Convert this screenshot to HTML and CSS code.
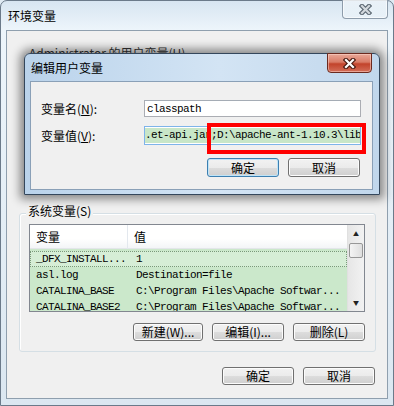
FILE: index.html
```html
<!DOCTYPE html>
<html>
	<head>
		<meta charset="UTF-8">
		<title>环境变量</title>
		<link rel="stylesheet" href="styles.css">
	</head>
	<body>
		<div class="window">
			<div class="titlebar">
				<span class="title">环境变量</span>
				<span class="close-btn">
					<svg width="13" height="11" viewBox="0 0 13 11"><path d="M3 2 L10 9 M10 2 L3 9" stroke="#5d6873" stroke-width="4.5" stroke-linecap="square"/><path d="M3 2 L10 9 M10 2 L3 9" stroke="#d3d8dd" stroke-width="2.2" stroke-linecap="square"/></svg>
				</span>
			</div>

			<div class="client">
				<!--用户变量 (被对话框挡住)-->
				<div class="user-area">Administrator 的用户变量(U)</div>

				<!--系统变量-->
				<div class="group">
					<span class="group-title">系统变量(S)</span>
					<div class="list">
						<div class="list-main">
							<div class="list-head">
								<span class="col1">变量</span>
								<span class="col2">值</span>
							</div>
							<div class="rows">
								<div class="row first"><span class="col1">_DFX_INSTALL...</span><span class="col2">1</span></div>
								<div class="row"><span class="col1">asl.log</span><span class="col2">Destination=file</span></div>
								<div class="row"><span class="col1">CATALINA_BASE</span><span class="col2">C:\Program Files\Apache Softwar...</span></div>
								<div class="row"><span class="col1">CATALINA_BASE2</span><span class="col2">C:\Program Files\Apache Softwar...</span></div>
							</div>
						</div>
						<div class="scrollbar">
							<span class="arrow">&#9650;</span>
							<span class="thumb"></span>
							<span class="spacer"></span>
							<span class="arrow">&#9660;</span>
						</div>
					</div>
					<div class="btn-row">
						<span class="btn w70">新建(W)...</span>
						<span class="btn">编辑(I)...</span>
						<span class="btn">删除(L)</span>
					</div>
				</div>

				<div class="btn-row bottom">
					<span class="btn">确定</span>
					<span class="btn">取消</span>
				</div>
			</div>

			<!--编辑用户变量 对话框-->
			<div class="dialog">
				<div class="dlg-title">
					<span>编辑用户变量</span>
					<span class="red-close">
						<svg width="13" height="11" viewBox="0 0 13 11"><path d="M3 2 L10 9 M10 2 L3 9" stroke="#4a1b12" stroke-width="4.5" stroke-linecap="square"/><path d="M3 2 L10 9 M10 2 L3 9" stroke="#ffffff" stroke-width="2.2" stroke-linecap="square"/></svg>
					</span>
				</div>
				<div class="dlg-client">
					<div class="field">
						<span class="label">变量名(<u>N</u>):</span>
						<span class="input">classpath</span>
					</div>
					<div class="field second">
						<span class="label">变量值(<u>V</u>):</span>
						<span class="input"><span class="sel">.et-api.jar;D:\apache-ant-1.10.3\lib</span><span class="caret"></span></span>
					</div>
					<div class="btn-row dlg-btns">
						<span class="btn default">确定</span>
						<span class="btn">取消</span>
					</div>
				</div>
				<div class="mark"></div>
			</div>
		</div>
	</body>
</html>
```

FILE: styles.css
```css
*{
	margin: 0;
	padding: 0;
	box-sizing: border-box;
}

body{
	width: 394px;
	height: 406px;
	overflow: hidden;
	background: #dfeaf3;
	font: 12px "Noto Sans CJK SC", sans-serif;
	color: #000;
}

/*外层窗口*/
.window{
	position: relative;
	height: 406px;
	border: 1px solid #6b7a8a;
	border-radius: 7px 7px 0 0;
	background: linear-gradient(to bottom, #d7e5f1, #edf5fb 29px, #dbe7f1);
	padding: 0 5px 7px 5px;
}

.titlebar{
	height: 29px;
	display: flex;
	align-items: center;
	padding-left: 2px;
}

.title{
	line-height: 12px;
}

.close-btn{
	position: absolute;
	top: -1px;
	right: 5px;
	width: 46px;
	height: 19px;
	border: 1px solid #8e9cab;
	border-top: none;
	border-radius: 0 0 4px 4px;
	background: linear-gradient(to bottom, rgba(255,255,255,0.5), rgba(255,255,255,0.15));
	box-shadow: inset 0 0 0 1px rgba(255,255,255,0.6);
	display: flex;
	align-items: center;
	justify-content: center;
}

.client{
	height: 369px;
	border: 1px solid #8f9fae;
	background: #f0f0f0;
	padding: 0 11px 0 0;
}

.user-area{
	height: 182px;
	padding: 16px 0 0 22px;
	line-height: 12px;
	color: #333;
}

/*分组框*/
.group{
	position: relative;
	margin-left: 12px;
	border: 1px solid #d5dfe5;
	border-radius: 3px;
	padding: 10px 10px 10px 9px;
	box-shadow: 1px 1px 0 #fff inset;
}

.group-title{
	position: absolute;
	top: -9px;
	left: 6px;
	padding: 0 2px;
	background: #f0f0f0;
	line-height: 12px;
}

/*列表*/
.list{
	display: flex;
	height: 88px;
	border: 1px solid #828790;
	background: #fff;
}

.list-main{
	flex: 1;
	overflow: hidden;
}

.list-head{
	display: flex;
	height: 24px;
	align-items: center;
	background: linear-gradient(to bottom, #fff 60%, #f3f5f7);
	border-bottom: 1px solid #e3e6ea;
}

.list-head .col1{
	border-right: 1px solid #e3e8ee;
	height: 24px;
	line-height: 24px;
}

.col1{
	width: 98px;
	padding-left: 6px;
	flex: none;
}

.col2{
	padding-left: 6px;
	white-space: nowrap;
}

.rows{
	background: #cbe8cb;
	height: 62px;
	padding-top: 2px;
	font: 11px "Liberation Mono", monospace;
	letter-spacing: -0.6px;
}

.row{
	display: flex;
	height: 16px;
	align-items: center;
}

.row .col2{
	padding-left: 8px;
}

.row.first{
	background: #d6eed6;
	outline: 1px dotted #7a9a7a;
	outline-offset: -1px;
}

.scrollbar{
	width: 17px;
	display: flex;
	flex-direction: column;
	align-items: center;
	background: linear-gradient(to right, #e6e6e6, #f2f2f2);
	border-left: 1px solid #e0e0e0;
}

.arrow{
	font-size: 6px;
	line-height: 17px;
	height: 17px;
	color: #222;
}

.thumb{
	width: 14px;
	height: 15px;
	margin-top: 1px;
	border: 1px solid #979797;
	border-radius: 2px;
	background: linear-gradient(to right, #f4f4f4, #dedede);
}

.spacer{
	flex: 1;
}

/*按钮*/
.btn-row{
	display: flex;
	justify-content: flex-end;
	gap: 9px;
	margin-top: 11px;
}

.btn{
	width: 72px;
	height: 18px;
	border: 1px solid #707070;
	border-radius: 3px;
	background: linear-gradient(to bottom, #f2f2f2 0%, #ebebeb 50%, #dddddd 50%, #cfcfcf 100%);
	box-shadow: inset 0 0 0 1px #fcfcfc;
	display: flex;
	align-items: center;
	justify-content: center;
	line-height: 12px;
}

.btn.w70{
	width: 70px;
}

.btn-row.bottom{
	margin-top: 15px;
	margin-right: 1px;
}

/*编辑用户变量对话框*/
.dialog{
	position: absolute;
	left: 23px;
	top: 52px;
	width: 356px;
	height: 142px;
	border: 1px solid #34475c;
	border-radius: 6px 6px 0 0;
	background: linear-gradient(to right, #bad3eb, #d3e4f4 55%, #c1d7ec);
	box-shadow: 0 0 10px 4px rgba(0,0,0,0.45);
	padding: 0 6px 4px 5px;
}

.dlg-title{
	height: 27px;
	display: flex;
	align-items: center;
	padding-left: 1px;
	line-height: 12px;
}

.red-close{
	position: absolute;
	top: -1px;
	right: 7px;
	width: 45px;
	height: 20px;
	border: 1px solid #6b2a1f;
	border-radius: 0 0 4px 4px;
	background: linear-gradient(to bottom, #e9a898 0%, #d97b66 45%, #c2432b 55%, #d36e59 100%);
	box-shadow: inset 0 0 0 1px rgba(255,220,210,0.5);
	display: flex;
	align-items: center;
	justify-content: center;
}

.dlg-client{
	height: 109px;
	border: 1px solid #8aa0b7;
	background: #f0f0f0;
	padding: 18px 11px 0 10px;
}

.field{
	display: flex;
	align-items: center;
	height: 17px;
}

.field.second{
	margin-top: 9px;
	height: 19px;
}

.label{
	width: 103px;
	line-height: 12px;
}

.input{
	width: 217px;
	height: 100%;
	border: 1px solid #abadb3;
	border-top-color: #a5acb5;
	background: #fff;
	display: flex;
	align-items: center;
	padding-left: 2px;
	font: 11px "Liberation Mono", monospace;
	letter-spacing: -0.6px;
	white-space: nowrap;
	overflow: hidden;
}

.field.second .input{
	padding-left: 0;
	border-color: #7eb4ea;
}

.sel{
	background: #c8e6c8;
	line-height: 15px;
}

.caret{
	width: 1px;
	height: 13px;
	background: #000;
}

.dlg-btns{
	margin-top: 13px;
	margin-right: 1px;
}

.dlg-btns .btn{
	height: 19px;
}

.btn.default{
	border-color: #3c7fb1;
	box-shadow: inset 0 0 0 1px #bfe4f7;
}

/*红色标注框*/
.mark{
	position: absolute;
	left: 182px;
	top: 69px;
	width: 159px;
	height: 31px;
	border: 4px solid #ff0000;
}
```
